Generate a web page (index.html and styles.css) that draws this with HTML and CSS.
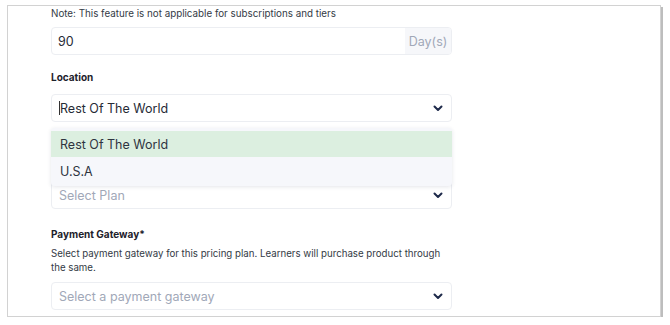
FILE: index.html
```html
<!DOCTYPE html>
<html>
<head>
    <title>Pricing Plan</title>
    <link rel="stylesheet" href="styles.css">
</head>
<body>
    <div class="frame">
        <p class="note">Note: This feature is not applicable for subscriptions and tiers</p>

        <div class="input-group">
            <span class="input-value">90</span>
            <span class="addon">Day(s)</span>
        </div>

        <label class="field-label location-label">Location</label>
        <div class="select-wrap">
            <div class="select">
                <span class="select-value"><span class="caret"></span>Rest Of The World</span>
                <svg class="chevron" width="10" height="7" viewBox="0 0 10 7"><path d="M1.5 1.5l3.5 3.5 3.5-3.5" fill="none" stroke="#1e2a4a" stroke-width="2" stroke-linecap="round" stroke-linejoin="round"/></svg>
            </div>
            <ul class="dropdown">
                <li class="option active">Rest Of The World</li>
                <li class="option">U.S.A</li>
            </ul>
        </div>

        <div class="select plan-select">
            <span class="placeholder">Select Plan</span>
            <svg class="chevron" width="10" height="7" viewBox="0 0 10 7"><path d="M1.5 1.5l3.5 3.5 3.5-3.5" fill="none" stroke="#1e2a4a" stroke-width="2" stroke-linecap="round" stroke-linejoin="round"/></svg>
        </div>

        <label class="field-label gateway-label">Payment Gateway*</label>
        <p class="help">Select payment gateway for this pricing plan. Learners will purchase product through the same.</p>
        <div class="select gateway-select">
            <span class="placeholder">Select a payment gateway</span>
            <svg class="chevron" width="10" height="7" viewBox="0 0 10 7"><path d="M1.5 1.5l3.5 3.5 3.5-3.5" fill="none" stroke="#1e2a4a" stroke-width="2" stroke-linecap="round" stroke-linejoin="round"/></svg>
        </div>
    </div>
</body>
</html>
```

FILE: styles.css
```css
body {
    background-color: white;
    margin: 0;
    padding: 0;
    font-family: 'Inter', 'Noto Sans', sans-serif;
    color: #262b36;
}

.frame {
    margin: 5px 0 0 7px;
    width: 654px;
    height: 312px;
    border: 1px solid #d2d2d2;
    box-shadow: 2px 2px 0 #bdbdbd;
    padding-left: 43px;
    box-sizing: border-box;
    overflow: hidden;
}

.note {
    margin: 0;
    font-size: 9.8px;
    line-height: 16px;
    color: #333a45;
}

.input-group {
    display: flex;
    width: 401px;
    height: 28px;
    margin-top: 5px;
    border: 1px solid #eceef2;
    border-radius: 4px;
    box-sizing: border-box;
    overflow: hidden;
}

.input-value {
    flex: 1;
    display: flex;
    align-items: center;
    padding-left: 6px;
    font-size: 12.5px;
    color: #262b36;
}

.addon {
    display: flex;
    align-items: center;
    justify-content: center;
    width: 46px;
    background-color: #f6f7fa;
    color: #a1a8b8;
    font-size: 12.5px;
}

.field-label {
    display: block;
    font-size: 10px;
    font-weight: 700;
    line-height: 16px;
    color: #1d212b;
}

.location-label {
    margin-top: 14px;
    margin-bottom: 9px;
}

.select-wrap {
    position: relative;
    width: 401px;
}

.select {
    display: flex;
    align-items: center;
    justify-content: space-between;
    width: 401px;
    height: 28px;
    padding: 0 8px 0 7px;
    border: 1px solid #eceef2;
    border-radius: 4px;
    box-sizing: border-box;
    font-size: 12.5px;
}

.select-value {
    display: flex;
    align-items: center;
    color: #262b36;
}

.caret {
    display: inline-block;
    width: 1px;
    height: 14px;
    background-color: #333;
}

.placeholder {
    color: #a1a8b8;
}

.chevron {
    display: block;
}

.dropdown {
    position: absolute;
    top: 34px;
    left: 0;
    right: 0;
    margin: 0;
    padding: 3px 0 0 0;
    list-style: none;
    background-color: #f6f7fb;
    border-radius: 4px;
    box-shadow: 0 1px 4px rgba(30, 40, 70, 0.12);
    z-index: 2;
}

.option {
    height: 26px;
    display: flex;
    align-items: center;
    padding-left: 9px;
    font-size: 12.5px;
    color: #2e3440;
}

.option + .option {
    height: 29px;
}

.option.active {
    background-color: #dcefe0;
}

.plan-select {
    margin-top: 59px;
}

.gateway-label {
    margin-top: 17px;
}

.help {
    margin: 5px 0 0 0;
    width: 396px;
    font-size: 9.7px;
    line-height: 13.5px;
    color: #333a45;
}

.gateway-select {
    margin-top: 8px;
}
```
